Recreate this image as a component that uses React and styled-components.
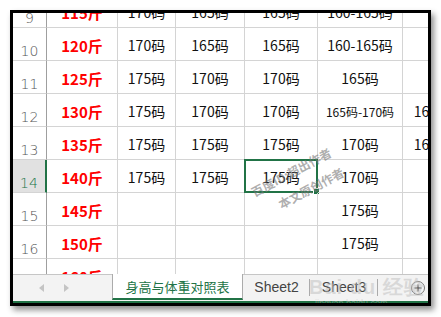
import styled, { createGlobalStyle } from 'styled-components';

const GlobalStyle = createGlobalStyle`
  html, body {
    margin: 0;
    padding: 0;
    background: #fff;
  }
  body {
    font-family: "Noto Sans CJK SC", "DejaVu Sans", sans-serif;
  }
`;

const Page = styled.div`
  width: 441px;
  height: 317px;
  padding: 10px 0 0 10px;
  box-sizing: border-box;
`;

const Frame = styled.div`
  position: relative;
  width: 421px;
  height: 296px;
  box-sizing: border-box;
  border: 3px solid #000;
  background: #fff;
  box-shadow: 3px 4px 6px rgba(0, 0, 0, 0.45);
  display: flex;
  flex-direction: column;
  overflow: hidden;
`;

const Sheet = styled.div`
  height: 261px;
  overflow: hidden;
  flex-shrink: 0;
`;

const Rows = styled.div`
  margin-top: -18px;
`;

const Row = styled.div`
  display: flex;
  height: 33px;
`;

const COLS = [71, 58, 69, 73, 85, 60];

const HeaderCell = styled.div`
  width: 34px;
  flex-shrink: 0;
  box-sizing: border-box;
  display: flex;
  align-items: flex-end;
  justify-content: center;
  padding-bottom: 1px;
  font-size: 14px;
  line-height: 16px;
  color: ${({ $active }) => ($active ? '#217346' : '#555')};
  background: ${({ $active }) => ($active ? '#e1e1e1' : '#fff')};
  border-bottom: 1px solid #d4d4d4;
  border-right: ${({ $active }) => ($active ? '2px solid #217346' : '1px solid #9f9f9f')};
  font-family: "DejaVu Sans", sans-serif;
  font-weight: 300;
`;

const Cell = styled.div`
  position: relative;
  width: ${({ $w }) => $w}px;
  flex-shrink: 0;
  box-sizing: border-box;
  display: flex;
  align-items: center;
  justify-content: center;
  padding-top: 2px;
  border-right: 1px solid #d4d4d4;
  border-bottom: 1px solid #d4d4d4;
  font-size: ${({ $small }) => ($small ? '12px' : '14px')};
  color: ${({ $red }) => ($red ? '#ff0000' : '#111')};
  font-weight: ${({ $red }) => ($red ? 700 : 400)};
  white-space: nowrap;
  ${({ $red }) => $red && 'font-size: 15px;'}
`;

const Selection = styled.div`
  position: absolute;
  left: -1px;
  top: -1px;
  right: -1px;
  bottom: -1px;
  border: 2px solid #217346;
  pointer-events: none;
`;

const Handle = styled.span`
  position: absolute;
  right: -4px;
  bottom: -4px;
  width: 5px;
  height: 5px;
  background: #217346;
  border: 1px solid #fff;
`;

const TabBar = styled.div`
  flex: 1;
  display: flex;
  align-items: stretch;
  background: #f3f3f3;
  border-top: 1px solid #c6c6c6;
  border-bottom: 2px solid #217346;
  position: relative;
`;

const Nav = styled.div`
  width: 99px;
  display: flex;
  align-items: center;
  gap: 20px;
  padding-left: 26px;
  box-sizing: border-box;
`;

const Arrow = styled.span`
  width: 0;
  height: 0;
  border-top: 4px solid transparent;
  border-bottom: 4px solid transparent;
  ${({ $dir }) =>
    $dir === 'left'
      ? 'border-right: 5px solid #c4c4c4;'
      : 'border-left: 5px solid #c4c4c4;'}
`;

const Tab = styled.div`
  width: ${({ $w }) => $w}px;
  box-sizing: border-box;
  display: flex;
  align-items: center;
  justify-content: center;
  font-size: ${({ $active }) => ($active ? '13px' : '14px')};
  position: relative;
  color: ${({ $active }) => ($active ? '#217346' : '#444')};
  background: ${({ $active }) => ($active ? '#fff' : 'transparent')};
  margin-top: ${({ $active }) => ($active ? '-1px' : '0')};
  border-left: ${({ $active }) => ($active ? '1px solid #ababab' : 'none')};
  border-right: ${({ $active }) => ($active ? '1px solid #ababab' : 'none')};
  border-bottom: ${({ $active }) => ($active ? '2px solid #217346' : '2px solid transparent')};
  margin-bottom: 1px;
  font-family: ${({ $active }) =>
    $active ? '"Noto Sans CJK SC", sans-serif' : '"Liberation Sans", sans-serif'};
  padding-top: 1px;

  &::after {
    content: '';
    display: ${({ $sep }) => ($sep ? 'block' : 'none')};
    position: absolute;
    right: 0;
    top: 4px;
    bottom: 2px;
    width: 1px;
    background: #ababab;
  }
`;

const AddButton = styled.div`
  position: absolute;
  right: 3px;
  top: 6px;
  width: 12px;
  height: 12px;
  border-radius: 50%;
  border: 1px solid #777;
  display: flex;
  align-items: center;
  justify-content: center;
  background: #f3f3f3;
`;

const Watermark = styled.div`
  position: absolute;
  left: ${({ $x }) => $x}px;
  top: ${({ $y }) => $y}px;
  transform: rotate(${({ $r }) => $r}deg);
  transform-origin: left top;
  color: rgba(120, 120, 120, 0.6);
  font-size: ${({ $size }) => $size}px;
  font-weight: 700;
  white-space: nowrap;
  pointer-events: none;
  font-family: "Noto Sans CJK SC", sans-serif;
`;

const BaiduMark = styled.div`
  position: absolute;
  left: 296px;
  top: 263px;
  display: flex;
  flex-direction: column;
  align-items: flex-start;
  color: rgba(190, 190, 190, 0.5);
  pointer-events: none;
  font-family: "Liberation Sans", sans-serif;
`;

const BaiduTitle = styled.span`
  font-size: 20px;
  font-weight: 700;
  line-height: 22px;
  letter-spacing: 1px;
`;

const BaiduUrl = styled.span`
  font-size: 9px;
  margin-left: 6px;
  line-height: 10px;
`;

const data = [
  ['9', '115斤', '170码', '165码', '165码', '160-165码', ''],
  ['10', '120斤', '170码', '165码', '165码', '160-165码', ''],
  ['11', '125斤', '175码', '170码', '170码', '165码', ''],
  ['12', '130斤', '175码', '170码', '170码', '165码-170码', '165码'],
  ['13', '135斤', '175码', '175码', '175码', '170码', '165码'],
  ['14', '140斤', '175码', '175码', '175码', '170码', ''],
  ['15', '145斤', '', '', '', '175码', ''],
  ['16', '150斤', '', '', '', '175码', ''],
  ['17', '160斤', '', '', '', '', ''],
];

export default function App() {
  return (
    <Page>
      <GlobalStyle />
      <Frame>
        <Sheet>
          <Rows>
            {data.map(([num, ...cells]) => (
              <Row key={num}>
                <HeaderCell $active={num === '14'}>{num}</HeaderCell>
                {cells.map((value, i) => (
                  <Cell
                    key={i}
                    $w={COLS[i]}
                    $red={i === 0}
                    $small={value === '165码-170码'}
                  >
                    {value}
                    {num === '14' && i === 3 && (
                      <Selection>
                        <Handle />
                      </Selection>
                    )}
                  </Cell>
                ))}
              </Row>
            ))}
          </Rows>
        </Sheet>
        <TabBar>
          <Nav>
            <Arrow $dir="left" />
            <Arrow $dir="right" />
          </Nav>
          <Tab $active $w={131}>身高与体重对照表</Tab>
          <Tab $w={67} $sep>Sheet2</Tab>
          <Tab $w={68} $sep>Sheet3</Tab>
          <AddButton>
            <svg width="8" height="8" viewBox="0 0 8 8">
              <path d="M4 0.5V7.5M0.5 4H7.5" stroke="#666" strokeWidth="1.4" />
            </svg>
          </AddButton>
        </TabBar>
        <Watermark $x={235} $y={172} $r={-28} $size={12}>百度ID:超出作者</Watermark>
        <Watermark $x={262} $y={184} $r={-28} $size={12}>本文原创作者</Watermark>
        <BaiduMark>
          <BaiduTitle>Bai du 经验</BaiduTitle>
          <BaiduUrl>jingyan.baidu.com</BaiduUrl>
        </BaiduMark>
      </Frame>
    </Page>
  );
}
